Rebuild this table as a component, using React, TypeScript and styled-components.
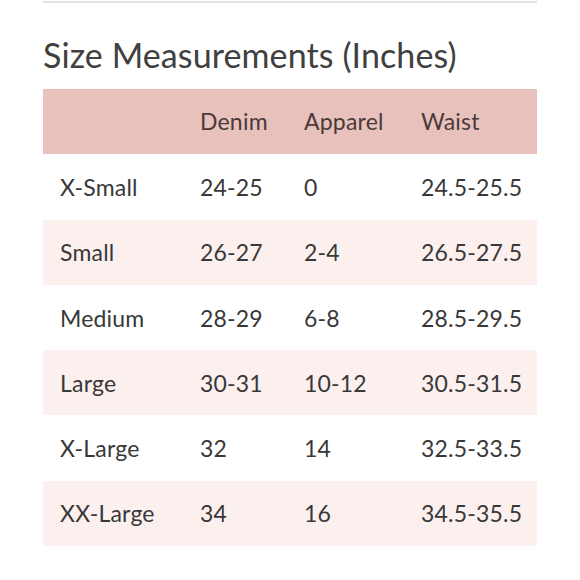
import React from 'react';
import styled, { createGlobalStyle } from 'styled-components';

const GlobalStyle = createGlobalStyle`
  html, body {
    margin: 0;
    padding: 0;
    background: #ffffff;
  }
  body {
    font-family: 'Lato', 'Open Sans', sans-serif;
    color: #3a3a3a;
  }
`;

const sizes = [
  { label: 'X-Small', denim: '24-25', apparel: '0', waist: '24.5-25.5' },
  { label: 'Small', denim: '26-27', apparel: '2-4', waist: '26.5-27.5' },
  { label: 'Medium', denim: '28-29', apparel: '6-8', waist: '28.5-29.5' },
  { label: 'Large', denim: '30-31', apparel: '10-12', waist: '30.5-31.5' },
  { label: 'X-Large', denim: '32', apparel: '14', waist: '32.5-33.5' },
  { label: 'XX-Large', denim: '34', apparel: '16', waist: '34.5-35.5' },
];

const Page = styled.div`
  width: 494px;
  margin: 0 0 0 43px;
  padding-top: 1px;
`;

const Divider = styled.hr`
  margin: 0;
  border: none;
  height: 2px;
  background: #e2e2e2;
`;

const Title = styled.h2`
  margin: 0;
  padding-top: 32px;
  height: 54px;
  font-size: 34px;
  font-weight: 400;
  line-height: 40px;
  color: #404040;
  letter-spacing: 0.1px;
`;

const Table = styled.table`
  width: 494px;
  border-collapse: collapse;
  table-layout: fixed;
  font-size: 23px;
`;

const Col = styled.col<{ $w: number }>`
  width: ${p => p.$w}px;
`;

const Row = styled.tr<{ $shade: 'head' | 'alt' | 'plain' }>`
  height: 65.3px;
  background: ${p =>
    p.$shade === 'head' ? '#e8c1bd' : p.$shade === 'alt' ? '#fcf0ef' : '#ffffff'};
`;

const Cell = styled.td<{ $pad?: number }>`
  box-sizing: border-box;
  padding: 0 0 0 ${p => p.$pad ?? 0}px;
  font-weight: 400;
  text-align: left;
  vertical-align: middle;
  color: #383838;
  white-space: nowrap;
  letter-spacing: 0.2px;
`;

const HeadCell = styled(Cell).attrs({ as: 'th' })`
  color: #4a3a38;
  padding-bottom: 2px;
`;

const widths = [157, 104, 117, 116];

const App: React.FC = () => (
  <>
    <GlobalStyle />
    <Page>
      <Divider />
      <Title>Size Measurements (Inches)</Title>
      <Table>
        <colgroup>
          {widths.map((w, i) => (
            <Col key={i} $w={w} />
          ))}
        </colgroup>
        <thead>
          <Row $shade="head">
            <HeadCell $pad={17}></HeadCell>
            <HeadCell>Denim</HeadCell>
            <HeadCell>Apparel</HeadCell>
            <HeadCell>Waist</HeadCell>
          </Row>
        </thead>
        <tbody>
          {sizes.map((s, i) => (
            <Row key={s.label} $shade={i % 2 === 1 ? 'alt' : 'plain'}>
              <Cell $pad={17}>{s.label}</Cell>
              <Cell>{s.denim}</Cell>
              <Cell>{s.apparel}</Cell>
              <Cell>{s.waist}</Cell>
            </Row>
          ))}
        </tbody>
      </Table>
    </Page>
  </>
);

export default App;
